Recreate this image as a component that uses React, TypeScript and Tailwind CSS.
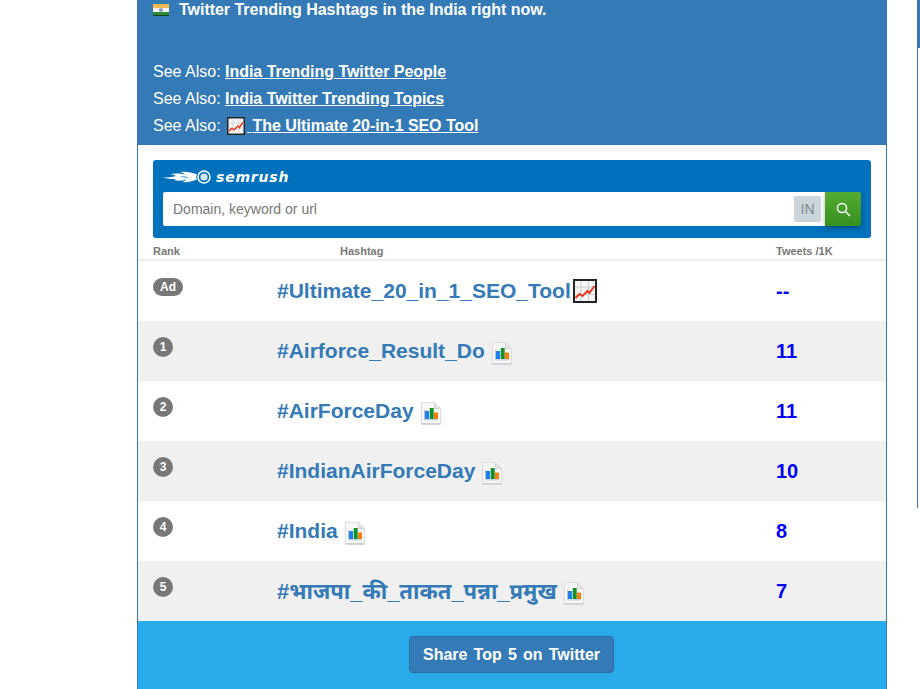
const font = "[font-family:'Liberation_Sans','Noto_Sans',sans-serif]";

const rows = [
  { rank: "1", tag: "#Airforce_Result_Do", tweets: "11", size: "text-[21px]" },
  { rank: "2", tag: "#AirForceDay", tweets: "11", size: "text-[21px]" },
  { rank: "3", tag: "#IndianAirForceDay", tweets: "10", size: "text-[21px]" },
  { rank: "4", tag: "#India", tweets: "8", size: "text-[21px]" },
  { rank: "5", tag: "#भाजपा_की_ताकत_पन्ना_प्रमुख", tweets: "7", size: "text-[22px]" },
];

function Flag() {
  return (
    <svg width="16" height="12" viewBox="0 0 16 12" className="shrink-0">
      <rect width="16" height="4" fill="#f7b84f" />
      <rect y="4" width="16" height="4" fill="#f4f4f4" />
      <rect y="8" width="16" height="4" fill="#2c8a34" />
      <rect y="11" width="16" height="1" fill="#14441c" />
      <circle cx="8" cy="6" r="2" fill="#8f9bc4" />
    </svg>
  );
}

function TrendIcon({ size = 24, className = "" }: { size?: number; className?: string }) {
  return (
    <svg width={size} height={size} viewBox="0 0 24 24" className={`inline-block shrink-0 ${className}`}>
      <rect x="1" y="1" width="22" height="22" fill="#f6f6f6" stroke="#222" strokeWidth="2" />
      <path d="M8 2v20M15.5 2v20M2 8h20M2 15.5h20" stroke="#d2d2d2" strokeWidth="1.2" fill="none" />
      <path d="M2.5 19l4-4 3 2 5-5 2 2 5-7" stroke="#ee3a1e" strokeWidth="2" fill="none" />
    </svg>
  );
}

function ChartIcon() {
  return (
    <svg width="20" height="23" viewBox="0 0 20 23" className="mt-[4px] inline-block shrink-0">
      <path d="M.5.5h13l6 6v16H.5z" fill="#f7f7f7" stroke="#dcdcdc" />
      <path d="M13.5.5v6h6" fill="#e2e2e2" stroke="#d4d4d4" />
      <rect x="3" y="8" width="1" height="10" fill="#b8c0c8" />
      <rect x="4" y="9" width="4" height="8" fill="#1f7ff0" />
      <rect x="8.7" y="6" width="4" height="11" fill="#14902a" />
      <rect x="13" y="10.5" width="4" height="6.5" fill="#fb7d0e" />
      <rect x="3" y="17" width="14" height="1.5" fill="#c8d6e4" />
      <rect x="1" y="21" width="18" height="1.5" fill="#d0d0d0" />
    </svg>
  );
}

function SemrushFlame() {
  return (
    <svg width="49" height="14" viewBox="0 0 49 14" className="shrink-0">
      <path d="M0 7.5C5 7.5 9 7 13 6 11 5 9 4.6 7 4.6 12 3 18 3.5 22 5 21 3.5 19.5 2.5 17.5 2 23 1.5 29 2.5 34 4.5 33 6 33 8 34 9.5 29 11.5 24 12.5 19 12 21 11.5 22.5 10.5 23 9.5 19 11 14 11 10.5 10 12 9.8 13 9.3 14 8.8 9 9.3 4 8.8 0 7.5z" fill="#fff" />
      <path d="M17 6.8c3-.6 6-.4 9 .4-3 .6-6 .4-9-.4z" fill="#0071bc" />
      <circle cx="41" cy="7" r="6" fill="none" stroke="#fff" strokeWidth="1.5" />
      <circle cx="41" cy="7" r="3.6" fill="#d8e8f4" />
    </svg>
  );
}

export default function App() {
  return (
    <div className={`flex h-[689px] w-[920px] overflow-hidden bg-white ${font}`}>
      <div className="w-[137px] shrink-0" />

      <main className="flex h-[689px] w-[750px] shrink-0 flex-col border-x border-[#337ab7]">
        {/* heading */}
        <header className="h-[145px] shrink-0 bg-[#337ab7] px-[15px] text-[16px] text-white">
          <h1 className="flex h-[20px] items-center gap-[10px] font-bold tracking-[-0.03px]">
            <Flag />
            <span>Twitter Trending Hashtags in the India right now.</span>
          </h1>
          <div className="mt-[38px] leading-[27px]">
            <p>See Also: <a className="font-bold tracking-[-0.03px] underline">India Trending Twitter People</a></p>
            <p>See Also: <a className="font-bold tracking-[-0.03px] underline">India Twitter Trending Topics</a></p>
            <p>
              See Also: <a className="font-bold tracking-[-0.05px] underline"><TrendIcon size={18} className="mx-[2px] align-[-4px]" /> <span className="pl-[1px]">The Ultimate 20-in-1 SEO Tool</span></a>
            </p>
          </div>
        </header>

        {/* semrush search */}
        <section className="mx-[15px] mt-[15px] h-[78px] w-[718px] shrink-0 rounded-[3px] bg-[#0071bc] px-[10px]">
          <div className="flex h-[32px] items-center gap-[4px] pt-[2px]">
            <SemrushFlame />
            <span className="text-[14px] font-bold italic leading-none tracking-[0.8px] text-white [font-family:'DejaVu_Sans',sans-serif]">semrush</span>
          </div>
          <div className="flex h-[34px] items-center">
            <div className="flex h-full flex-1 items-center rounded-l-[2px] bg-white pl-[10px] pr-[4px]">
              <span className="flex-1 text-[14px] text-[#777]">Domain, keyword or url</span>
              <span className="flex h-[26px] w-[27px] items-center justify-center rounded-[2px] bg-[#ccd5d9] text-[14px] text-[#7d8d95]">IN</span>
            </div>
            <button className="flex h-full w-[36px] items-center justify-center rounded-r-[2px] bg-gradient-to-b from-[#54ac33] to-[#37901e] shadow-[0_2px_4px_rgba(0,0,0,0.3)]">
              <svg width="15" height="15" viewBox="0 0 15 15" fill="none" stroke="#fff" strokeWidth="1.5">
                <circle cx="6" cy="6" r="4.6" />
                <path d="M9.5 9.5l4.5 4.5" />
              </svg>
            </button>
          </div>
        </section>

        {/* table head */}
        <div className="grid h-[23px] shrink-0 grid-cols-[139px_499px_1fr] items-end border-b-2 border-[#eee] pb-[1px] text-[11px] font-bold leading-[14px] text-[#777]">
          <span className="pl-[15px]">Rank</span>
          <span className="pl-[63px]">Hashtag</span>
          <span>Tweets /1K</span>
        </div>

        {/* ad row */}
        <div className="grid h-[60px] shrink-0 grid-cols-[139px_499px_1fr]">
          <div className="pl-[15px] pt-[17px]">
            <span className="flex h-[18px] w-[30px] items-center justify-center rounded-full bg-[#777] text-[12px] font-bold text-white">Ad</span>
          </div>
          <div className="flex items-center gap-[2px] text-[21px] font-bold text-[#337ab7]">
            <span>#Ultimate_20_in_1_SEO_Tool</span>
            <TrendIcon />
          </div>
          <div className="flex items-center text-[20px] font-bold text-[#0000ff]">--</div>
        </div>

        {rows.map((row, i) => (
          <div key={row.rank} className={`grid h-[60px] shrink-0 grid-cols-[139px_499px_1fr] ${i % 2 === 0 ? "bg-[#f0f0f0]" : "bg-white"}`}>
            <div className="pl-[15px] pt-[16px]">
              <span className="flex h-[20px] w-[20px] items-center justify-center rounded-full bg-[#777] text-[12px] font-bold text-white">{row.rank}</span>
            </div>
            <div className={`flex items-center gap-[7px] font-bold text-[#337ab7] ${row.size}`}>
              <span>{row.tag}</span>
              <ChartIcon />
            </div>
            <div className="flex items-center text-[20px] font-bold text-[#0000ff]">{row.tweets}</div>
          </div>
        ))}

        {/* share */}
        <footer className="flex flex-1 justify-center bg-[#29abe9] pr-[1px] pt-[15px]">
          <button className="h-[37px] w-[205px] rounded-[4px] border border-[#2e6da4] bg-[#337ab7] text-[16px] font-bold text-white [word-spacing:1.75px]">
            Share Top 5 on Twitter
          </button>
        </footer>
      </main>

      {/* edge of the next column */}
      <aside className="ml-[30px] h-[508px] w-[3px] shrink-0 border-l border-[#337ab7]">
        <div className="h-[48px] bg-[#337ab7]" />
      </aside>
    </div>
  );
}
